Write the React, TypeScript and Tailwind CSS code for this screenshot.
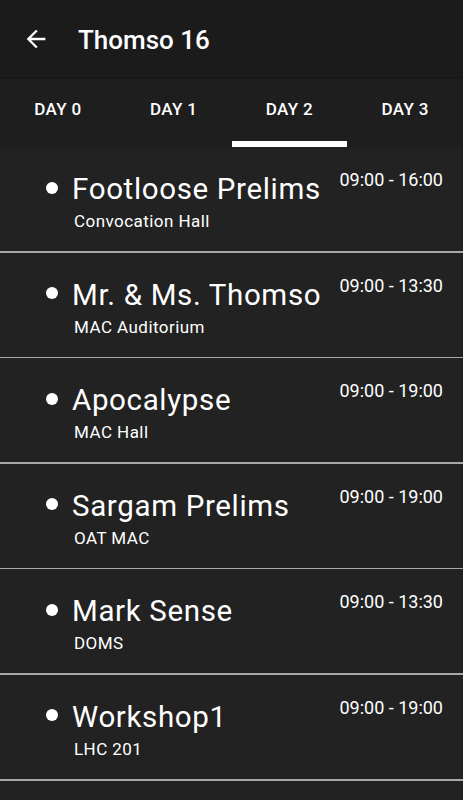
import React from "react";

const events = [
  { title: "Footloose Prelims", place: "Convocation Hall", time: "09:00 - 16:00" },
  { title: "Mr. & Ms. Thomso", place: "MAC Auditorium", time: "09:00 - 13:30" },
  { title: "Apocalypse", place: "MAC Hall", time: "09:00 - 19:00" },
  { title: "Sargam Prelims", place: "OAT MAC", time: "09:00 - 19:00" },
  { title: "Mark Sense", place: "DOMS", time: "09:00 - 13:30" },
  { title: "Workshop1", place: "LHC 201", time: "09:00 - 19:00" },
];

const tabs = ["DAY 0", "DAY 1", "DAY 2", "DAY 3"];

export default function App() {
  return (
    <div
      className="w-[463px] h-[800px] overflow-hidden bg-[#222222] text-white"
      style={{ fontFamily: "Roboto, 'Noto Sans', sans-serif" }}
    >
      <div className="h-[77px] bg-[#1b1b1b] flex items-center shadow-[0_1px_2px_rgba(0,0,0,0.4)] relative z-10">
        <svg className="ml-[22px]" width="28" height="28" viewBox="0 0 24 24" fill="white">
          <path d="M20 11H7.83l5.59-5.59L12 4l-8 8 8 8 1.41-1.41L7.83 13H20v-2z" />
        </svg>
        <span className="ml-[28px] text-[26px] font-medium leading-none mt-[3px]">Thomso 16</span>
      </div>
      <div className="h-[70px] bg-[#1e1e1e] flex">
        {tabs.map((t, i) => (
          <div key={t} className="flex-1 flex flex-col">
            <div className="flex-1 flex items-center justify-center text-[17px] font-medium tracking-[0.3px] pt-[1px]">{t}</div>
            <div className={i === 2 ? "h-[6px] bg-white" : "h-[6px]"} />
          </div>
        ))}
      </div>
      <div className="flex flex-col">
        {events.map((e) => (
          <div key={e.title} className="flex flex-col">
            <div className="h-[104px] flex justify-between">
              <div className="flex flex-col pl-[46px] pt-[25px]">
                <div className="flex items-center h-[34px]">
                  <div className="w-[12px] h-[12px] rounded-full bg-white mr-[14px] mt-[-3px]" />
                  <span className="text-[29.5px] leading-[34px] tracking-[0.65px]">{e.title}</span>
                </div>
                <span className="text-[17px] leading-[20px] tracking-[0.45px] ml-[28px] mt-[5px]">{e.place}</span>
              </div>
              <div className="pr-[20px] pt-[22px] text-[18px] leading-[21px]">{e.time}</div>
            </div>
            <div className="h-[1.6px] bg-[#a8a8a8]" />
          </div>
        ))}
      </div>
    </div>
  );
}
